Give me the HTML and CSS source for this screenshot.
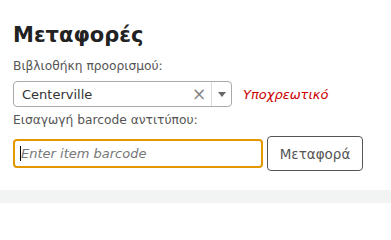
FILE: index.html
```html
<!DOCTYPE html>
<html lang="el">
<head>
<meta charset="utf-8">
<link rel="stylesheet" href="styles.css">
</head>
<body>
<main class="page">
  <h1 class="title">Μεταφορές</h1>
  <label class="label">Βιβλιοθήκη προορισμού:</label>
  <div class="row">
    <div class="select">
      <span class="select-value">Centerville</span>
      <span class="select-clear">×</span>
      <span class="select-sep"></span>
      <span class="select-arrow"></span>
    </div>
    <span class="required">Υποχρεωτικό</span>
  </div>
  <label class="label label-2">Εισαγωγή barcode αντιτύπου:</label>
  <div class="row row-input">
    <div class="input"><span class="caret"></span><span class="placeholder">Enter item barcode</span></div>
    <button class="btn">Μεταφορά</button>
  </div>
</main>
<footer class="footer"></footer>
</body>
</html>
```
FILE: styles.css
```css
html, body {
  margin: 0;
  padding: 0;
  background: #ffffff;
  font-family: "DejaVu Sans", sans-serif;
  color: #555;
}
.page {
  padding: 23px 13px 0 13px;
  height: 190px;
  box-sizing: border-box;
}
.title {
  margin: 0;
  font-size: 21px;
  font-weight: bold;
  color: #222;
  line-height: 24px;
}
.label {
  display: block;
  font-size: 12.25px;
  color: #555;
  line-height: 16px;
  margin-top: 11px;
}
.label-2 { margin-top: 5px; }
.row {
  display: flex;
  align-items: center;
  margin-top: 7px;
}
.select {
  width: 219px;
  height: 26px;
  box-sizing: border-box;
  border: 1px solid #aaa;
  border-radius: 4px;
  display: flex;
  align-items: center;
  padding-left: 8px;
}
.select-value {
  flex: 1;
  font-size: 13px;
  color: #333;
}
.select-clear {
  font-size: 17px;
  color: #888;
  width: 14px;
  text-align: center;
  margin-right: 5px;
}
.select-sep {
  width: 1px;
  align-self: stretch;
  background: #ddd;
}
.select-arrow {
  width: 19px;
  display: flex;
  justify-content: center;
}
.select-arrow::before {
  content: "";
  border-left: 4px solid transparent;
  border-right: 4px solid transparent;
  border-top: 5px solid #666;
}
.required {
  margin-left: 11px;
  font-style: italic;
  font-size: 13px;
  color: #cc0000;
}
.row-input { margin-top: 8px; }
.input {
  width: 250px;
  height: 29px;
  box-sizing: border-box;
  border: 2px solid #e39800;
  border-radius: 4px;
  display: flex;
  align-items: center;
  padding-left: 5px;
}
.caret {
  width: 1px;
  height: 15px;
  background: #000;
}
.placeholder {
  font-style: italic;
  font-size: 13px;
  color: #777;
}
.btn {
  margin-left: 4px;
  width: 96px;
  height: 35px;
  box-sizing: border-box;
  border: 1px solid #555;
  border-radius: 4px;
  background: #fff;
  font-family: "DejaVu Sans", sans-serif;
  font-size: 13.5px;
  color: #555;
  padding: 0;
}
.footer {
  height: 13px;
  background: #f2f3f3;
}
```
